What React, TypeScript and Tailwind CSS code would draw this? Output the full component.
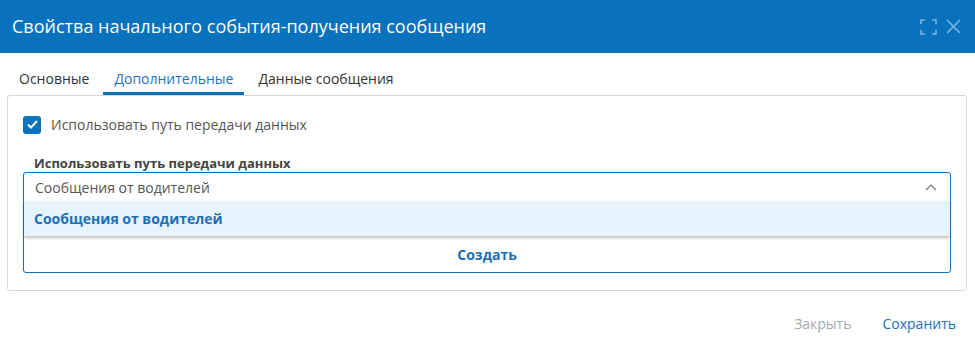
import React from "react";

const ExpandIcon = () => (
  <svg width="17" height="16" viewBox="0 0 17 16" fill="none" stroke="#7fb5e0" strokeWidth="1.6">
    <path d="M1 5V1h4M12 1h4v4M16 11v4h-4M5 15H1v-4" />
  </svg>
);

const CloseIcon = () => (
  <svg width="15" height="15" viewBox="0 0 15 15" fill="none" stroke="#7fb5e0" strokeWidth="1.6">
    <path d="M1 1l13 13M14 1L1 14" />
  </svg>
);

const App = () => {
  const tabs = ["Основные", "Дополнительные", "Данные сообщения"];
  return (
    <div className="w-[975px] h-[345px] bg-white font-['Open_Sans',sans-serif] flex flex-col">
      <div className="h-[53px] bg-[#0872bd] flex items-center justify-between pl-3 pr-[14px]">
        <h1 className="text-white text-[18px]">Свойства начального события-получения сообщения</h1>
        <div className="flex items-center gap-[9px]">
          <ExpandIcon />
          <CloseIcon />
        </div>
      </div>

      <div className="flex gap-[3px] px-2 pt-[14px] h-[42px]">
        {tabs.map((t, i) => (
          <div
            key={t}
            className={
              i === 1
                ? "px-[11px] text-[14px] text-[#1b74bd] border-b-[3px] border-[#0a72bd] h-[28px] flex items-start pt-[1px]"
                : "px-[11px] text-[14px] text-[#333] h-[28px] flex items-start pt-[1px]"
            }
          >
            {t}
          </div>
        ))}
      </div>

      <div className="mx-[7px] w-[960px] border border-[#d6d6d6] rounded-[3px] pl-[15px] pr-[15px] pt-[18px] pb-[17px]">
        <div className="flex items-center gap-[10px]">
          <div className="w-[18px] h-[18px] rounded-[3px] bg-[#0b72bd] flex items-center justify-center">
            <svg width="11" height="9" viewBox="0 0 11 9" fill="none" stroke="white" strokeWidth="2">
              <path d="M1 4.5l3 3L10 1" />
            </svg>
          </div>
          <span className="text-[14px] text-[#555]">Использовать путь передачи данных</span>
        </div>

        <div className="mt-[19px] pl-[11px] text-[13px] font-bold text-[#444] leading-[18px]">
          Использовать путь передачи данных
        </div>

        <div className="border border-[#1271bd] rounded-[3px] bg-white">
          <div className="h-[28px] flex items-center justify-between pl-[11px] pr-[13px]">
            <span className="text-[14px] text-[#555]">Сообщения от водителей</span>
            <svg width="12" height="7" viewBox="0 0 12 7" fill="none" stroke="#777" strokeWidth="1.2">
              <path d="M1 6l5-5 5 5" />
            </svg>
          </div>
          <div className="h-[35px] bg-[#e7f4fd] flex items-center pl-[10px] shadow-[0_2px_3px_rgba(0,0,0,0.25)] relative">
            <span className="text-[14px] font-bold text-[#1b6fb5]">Сообщения от водителей</span>
          </div>
          <div className="h-[36px] flex items-center justify-center">
            <span className="text-[14px] font-bold text-[#1b6fb5]">Создать</span>
          </div>
        </div>
      </div>

      <div className="flex justify-end items-center gap-[31px] pr-[19px] pt-[22px]">
        <span className="text-[14px] text-[#a8a8a8]">Закрыть</span>
        <span className="text-[14px] text-[#1b6fb5]">Сохранить</span>
      </div>
    </div>
  );
};

export default App;
